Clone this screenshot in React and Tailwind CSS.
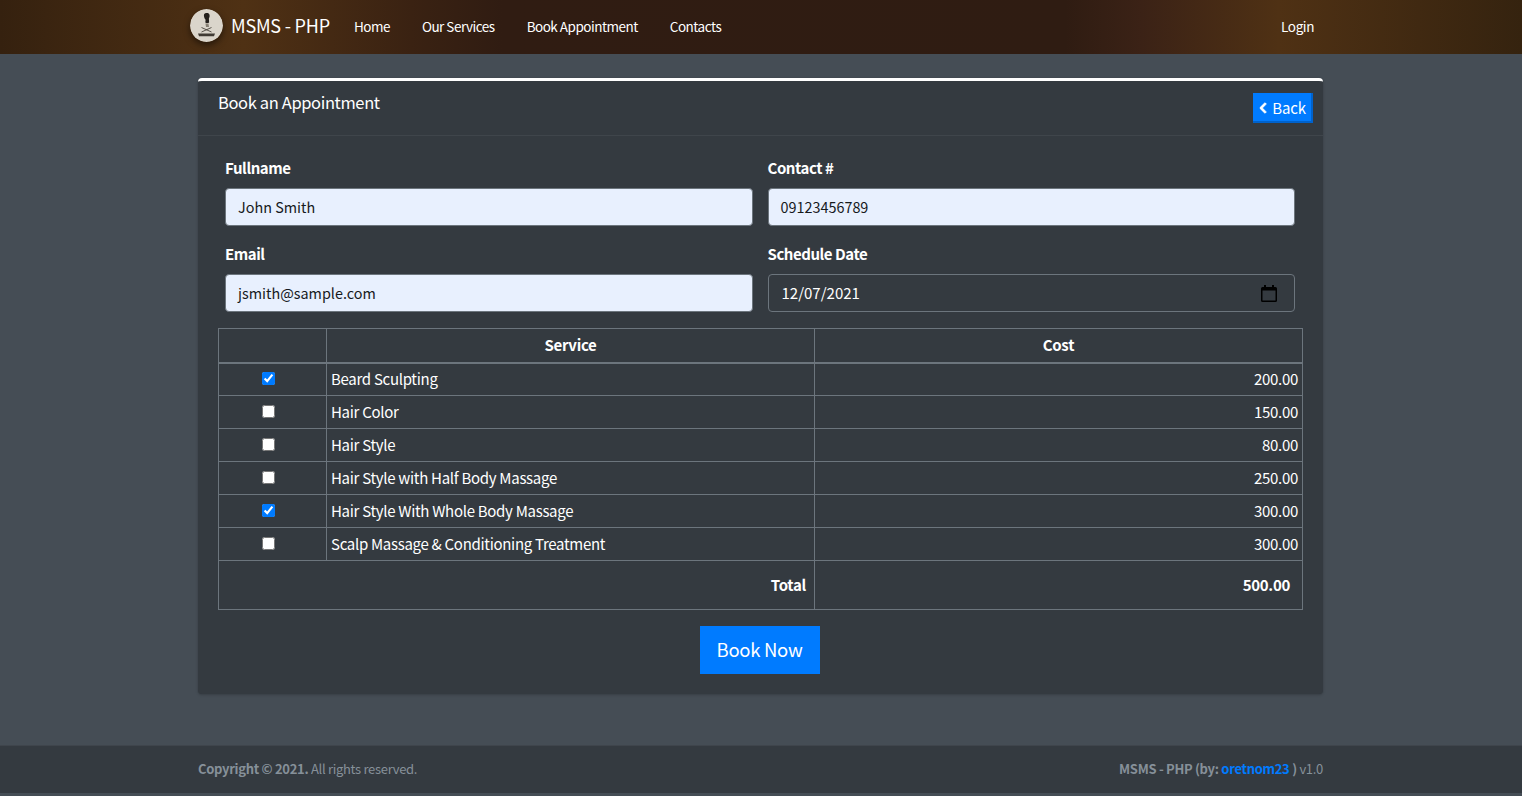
import React from "react";
import { FaChevronLeft } from "react-icons/fa";

const services = [
  { name: "Beard Sculpting", cost: "200.00", checked: true },
  { name: "Hair Color", cost: "150.00", checked: false },
  { name: "Hair Style", cost: "80.00", checked: false },
  { name: "Hair Style with Half Body Massage", cost: "250.00", checked: false },
  { name: "Hair Style With Whole Body Massage", cost: "300.00", checked: true },
  { name: "Scalp Massage & Conditioning Treatment", cost: "300.00", checked: false },
];

const Logo = () => (
  <svg width="33" height="33" viewBox="0 0 33 33" className="rounded-full shadow-[0_3px_6px_rgba(0,0,0,0.5)]">
    <circle cx="16.5" cy="16.5" r="16.5" fill="#dad5cb" />
    <path d="M14 5.500c1-1.800 4.500-2 5.300-.2.7 1.500.2 3.200-.4 4.200l.2 4c-1 .7-2.800.7-3.800 0l.3-2.700c-1.200-1-2-4-1.600-5.300z" fill="#24201c" />
    <path d="M15.500 14.500h3l.5 3.500h-3z" fill="#857e72" />
    <path d="M11.500 18.500l10 4.500M21.500 18.500l-10 4.500" stroke="#4a443c" strokeWidth="0.9" fill="none" />
    <path d="M8 24.500h17l-1 2.800h-15z" fill="#3f3a33" />
  </svg>
);

const Field = ({ label, value }) => (
  <div>
    <label className="block font-semibold text-[15px] tracking-[-0.45px] leading-6 mb-2 text-white">{label}</label>
    <div className="h-[38px] flex items-center px-3 rounded-[4px] border border-[#6c757d] bg-[#e8f0fe] text-[14.4px] text-[#16191c]">
      {value}
    </div>
  </div>
);

const ServiceRow = ({ service }) => (
  <tr className="h-[33px]">
    <td className="border border-[#6c757d] text-center p-0 pr-[8px]">
      <input
        type="checkbox"
        readOnly
        checked={service.checked}
        className="w-[13px] h-[13px] align-middle accent-[#007bff] relative -top-[2px]"
      />
    </td>
    <td className="border border-[#6c757d] px-[4px] py-0 text-white">{service.name}</td>
    <td className="border border-[#6c757d] px-[4px] py-0 text-right text-white">{service.cost}</td>
  </tr>
);

const App = () => {
  return (
    <div className="min-h-[796px] bg-[#454d55] pb-[3px] flex flex-col font-['Noto_Sans_CJK_SC','Noto_Sans',sans-serif] text-base text-white">
      <nav className="h-[54px] shrink-0 pr-[1px] bg-[linear-gradient(90deg,#35210f_0%,#4f3114_16%,#3a2212_27%,#301c12_33%,#2f1c12_70%,#3b2216_75%,#4f3114_84%,#35230f_100%)]">
        <div className="w-[1125px] mx-auto h-full flex items-center">
          <div className="flex items-center ml-[-8px] mt-[-4px]">
            <Logo />
            <span className="ml-2 text-[18px] tracking-[-0.2px] font-normal leading-none">MSMS - PHP</span>
          </div>
          <div className="flex items-center ml-[8px] text-[13.5px] tracking-[-0.5px] font-normal mt-[-2px]">
            <a className="px-4">Home</a>
            <a className="px-4">Our Services</a>
            <a className="px-4">Book Appointment</a>
            <a className="px-4">Contacts</a>
          </div>
          <a className="ml-auto mr-[9px] text-[13.5px] tracking-[-0.4px] font-normal mt-[-2px]">Login</a>
        </div>
      </nav>

      <main className="flex-1 pt-6 pr-[1px]">
        <div className="w-[1125px] mx-auto rounded-[4px] border-t-[3px] border-white bg-[#343a40] shadow-[0_0_1px_rgba(0,0,0,0.13),0_1px_3px_rgba(0,0,0,0.2)]">
          <div className="h-[55px] px-5 pt-[9px] flex justify-between border-b border-[rgba(255,255,255,0.06)]">
            <h3 className="text-[16.5px] tracking-[-0.37px] leading-6 font-normal">Book an Appointment</h3>
            <button className="h-[30px] w-[60px] mt-[3px] mr-[-10px] pt-[1px] pr-[1px] bg-[#007bff] border-r-2 border-b-2 border-[#0062cc] text-[15px] tracking-[-0.2px] leading-none flex items-center justify-center gap-[3px]">
              <FaChevronLeft className="text-[12px] stroke-[40px]" />
              Back
            </button>
          </div>

          <div className="px-5 pt-5 pb-5">
            <div className="grid grid-cols-2 gap-x-[15px] gap-y-[16px] pl-[7px] pr-[8px]">
              <Field label="Fullname" value="John Smith" />
              <Field label="Contact #" value="09123456789" />
              <Field label="Email" value="jsmith@sample.com" />
              <div>
                <label className="block font-semibold text-[15px] tracking-[-0.45px] leading-6 mb-2 text-white">Schedule Date</label>
                <div className="h-[38px] flex items-center justify-between pl-[13px] pr-3 rounded-[4px] border border-[#6c757d] text-[15px] text-white">
                  <span>12/07/2021</span>
                  <svg width="16" height="17" viewBox="0 0 16 17" fill="#000" className="mr-[5px]">
                    <path d="M3 0h2v2h6V0h2v2h1.500A1.500 1.500 0 0 1 16 3.500v12a1.500 1.500 0 0 1-1.500 1.500h-13A1.500 1.500 0 0 1 0 15.500v-12A1.500 1.500 0 0 1 1.500 2H3V0zm-1.500 5.500v10h13v-10h-13z" />
                  </svg>
                </div>
              </div>
            </div>

            <table className="w-[1084px] mt-4 border-collapse table-fixed text-[15px] tracking-[-0.3px]">
              <colgroup>
                <col className="w-[108px]" />
                <col className="w-[488px]" />
                <col className="w-[488px]" />
              </colgroup>
              <thead>
                <tr className="h-[34px]">
                  <th className="border border-b-2 border-[#6c757d] p-0"></th>
                  <th className="border border-b-2 border-[#6c757d] p-0 font-semibold">Service</th>
                  <th className="border border-b-2 border-[#6c757d] p-0 font-semibold">Cost</th>
                </tr>
              </thead>
              <tbody>
                {services.map((service) => (
                  <ServiceRow key={service.name} service={service} />
                ))}
                <tr className="h-[49px]">
                  <th colSpan={2} className="border border-[#6c757d] text-right px-2 py-0 font-semibold">Total</th>
                  <th className="border border-[#6c757d] text-right px-3 py-0 font-semibold">500.00</th>
                </tr>
              </tbody>
            </table>

            <div className="flex justify-center mt-4 pr-[2px]">
              <button className="w-[120px] h-12 pb-[2px] bg-[#007bff] text-[18.5px] tracking-[-0.3px] leading-none">Book Now</button>
            </div>
          </div>
        </div>
      </main>

      <footer className="h-12 shrink-0 pr-[1px] bg-[#343a40] border-t border-[#3f454c]">
        <div className="w-[1125px] mx-auto h-full flex items-center justify-between pb-[1px] text-[13px] tracking-[-0.3px] text-[#869099]">
          <div>
            <span className="font-semibold">Copyright © 2021.</span> All rights reserved.
          </div>
          <div>
            <span className="font-semibold">MSMS - PHP (by: <a className="text-[#007bff]">oretnom23</a> )</span> v1.0
          </div>
        </div>
      </footer>
    </div>
  );
};

export default App;
